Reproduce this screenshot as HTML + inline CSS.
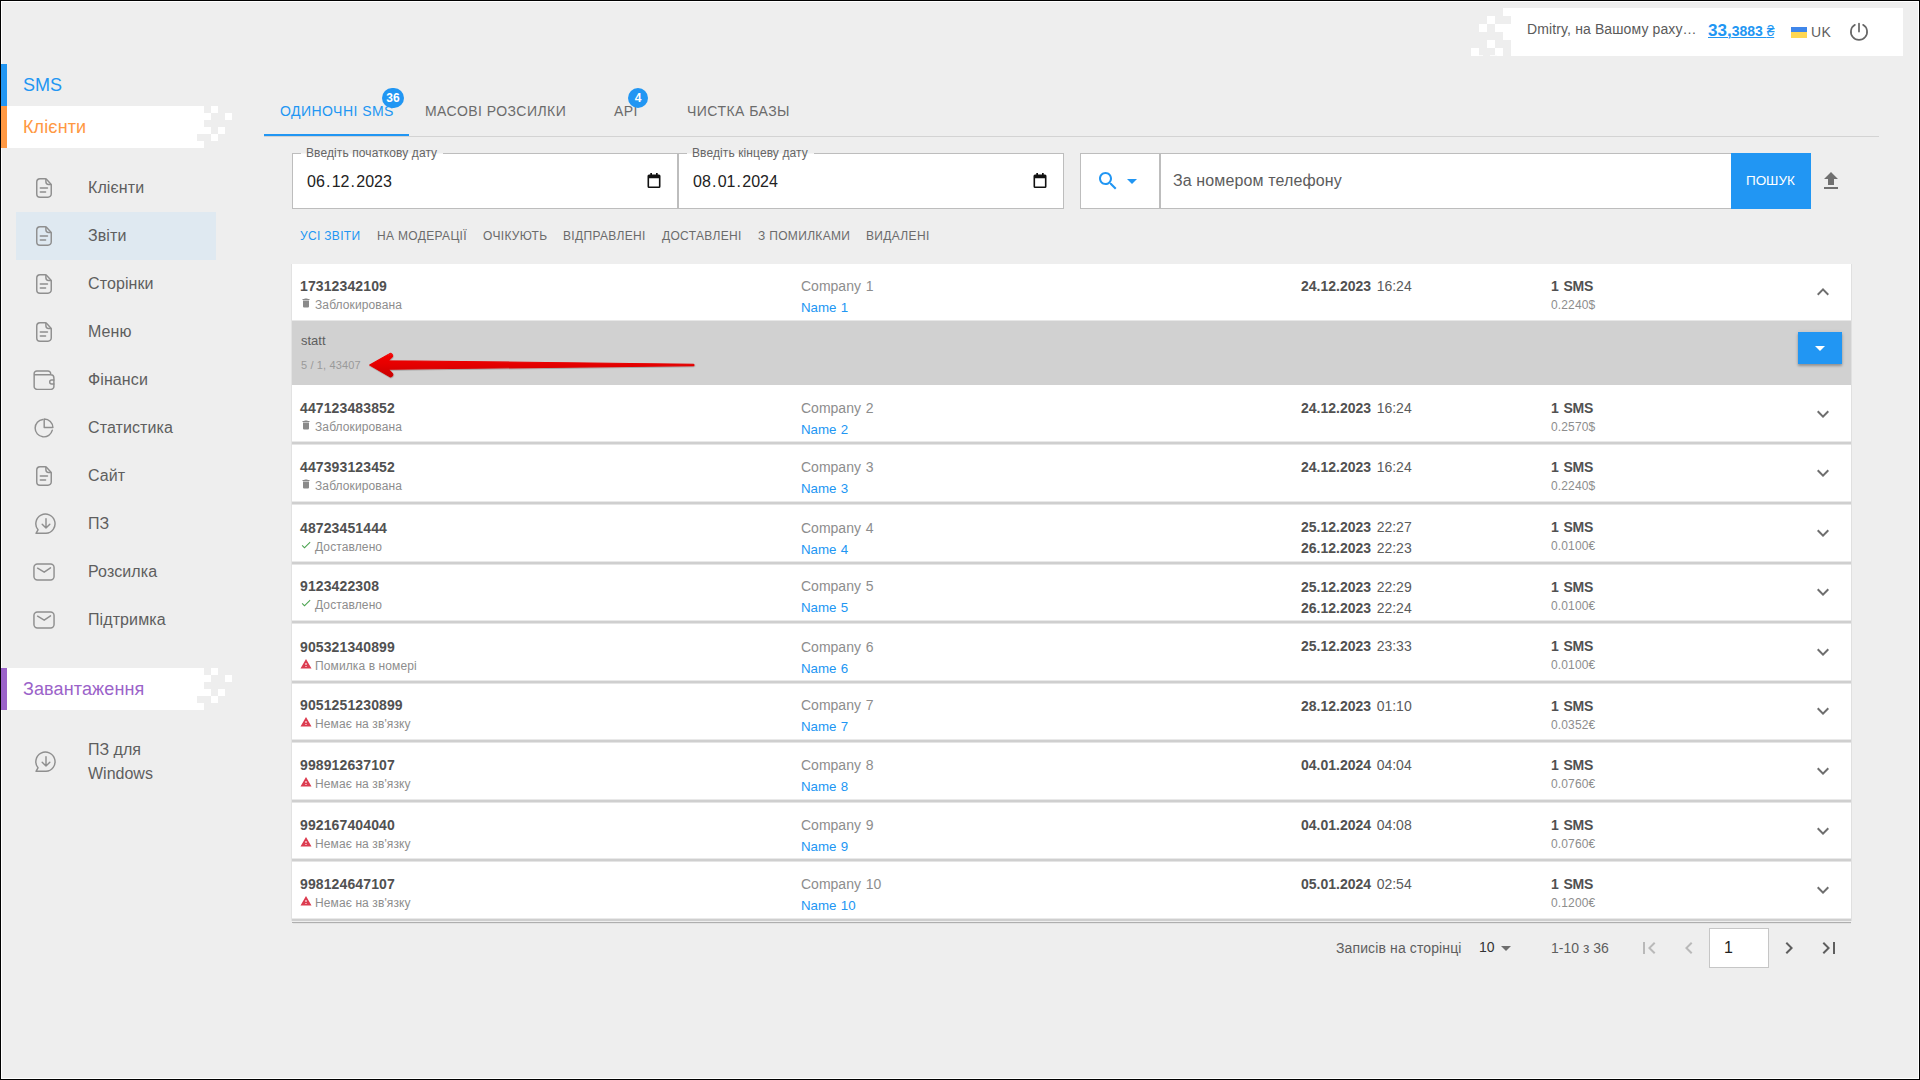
<!DOCTYPE html>
<html lang="uk"><head><meta charset="utf-8"><title>SMS - Звіти</title>
<style>
html,body{margin:0;padding:0}
html{overflow:hidden;background:#eeeeee;font-family:"Liberation Sans",sans-serif}
body{width:1920px;height:1080px;overflow:hidden;background:#eeeeee;position:relative;
font-family:"Liberation Sans",sans-serif;font-size:14px;color:#444}
.t{position:absolute;white-space:nowrap;margin:0;padding:0}
.b{position:absolute;display:block}
.st{fill:none;stroke:#8f8f8f;stroke-width:1.45;stroke-linecap:round;stroke-linejoin:round}
.tab{letter-spacing:.46px}
.sf{letter-spacing:.33px}
</style></head><body>
<div class="b" style="left:1px;top:1px;width:1916px;height:1076px;background:transparent;border:1px solid #fff;z-index:1"></div>
<div class="b" style="left:1px;top:64px;width:6px;height:42px;background:#2196f3;z-index:2"></div>
<div class="t" style="left:23px;top:73px;font-size:18px;line-height:24px;color:#2196f3;">SMS</div>
<div class="b" style="left:1px;top:106px;width:6px;height:42px;background:#ff9842;z-index:2"></div>
<div class="b" style="left:7px;top:106px;width:197px;height:7px;background:#fff;"></div>
<div class="b" style="left:211px;top:106px;width:7px;height:7px;background:#fff;"></div>
<div class="b" style="left:7px;top:113px;width:204px;height:7px;background:#fff;"></div>
<div class="b" style="left:225px;top:113px;width:7px;height:7px;background:#fff;"></div>
<div class="b" style="left:7px;top:120px;width:197px;height:7px;background:#fff;"></div>
<div class="b" style="left:7px;top:127px;width:204px;height:7px;background:#fff;"></div>
<div class="b" style="left:218px;top:127px;width:7px;height:7px;background:#fff;"></div>
<div class="b" style="left:7px;top:134px;width:190px;height:7px;background:#fff;"></div>
<div class="b" style="left:211px;top:134px;width:7px;height:7px;background:#fff;"></div>
<div class="b" style="left:7px;top:141px;width:197px;height:7px;background:#fff;"></div>
<div class="t" style="left:23px;top:115px;font-size:18px;line-height:24px;color:#ff9842;letter-spacing:.12px;">Клієнти</div>
<div class="b" style="left:1px;top:668px;width:6px;height:42px;background:#9b63c9;z-index:2"></div>
<div class="b" style="left:7px;top:668px;width:197px;height:7px;background:#fff;"></div>
<div class="b" style="left:211px;top:668px;width:7px;height:7px;background:#fff;"></div>
<div class="b" style="left:7px;top:675px;width:204px;height:7px;background:#fff;"></div>
<div class="b" style="left:225px;top:675px;width:7px;height:7px;background:#fff;"></div>
<div class="b" style="left:7px;top:682px;width:197px;height:7px;background:#fff;"></div>
<div class="b" style="left:7px;top:689px;width:204px;height:7px;background:#fff;"></div>
<div class="b" style="left:218px;top:689px;width:7px;height:7px;background:#fff;"></div>
<div class="b" style="left:7px;top:696px;width:190px;height:7px;background:#fff;"></div>
<div class="b" style="left:211px;top:696px;width:7px;height:7px;background:#fff;"></div>
<div class="b" style="left:7px;top:703px;width:197px;height:7px;background:#fff;"></div>
<div class="t" style="left:23px;top:677px;font-size:18px;line-height:24px;color:#9b63c9;letter-spacing:.12px;">Завантаження</div>
<div class="b" style="left:16px;top:212px;width:200px;height:48px;background:#dfe9f1;"></div>
<svg class="b" style="left:36px;top:178px;" width="16" height="20" viewBox="0 0 16 20"><path class="st" d="M9.2 .75H4A3.25 3.25 0 0 0 .75 4V16A3.25 3.25 0 0 0 4 19.25H12A3.25 3.25 0 0 0 15.25 16V7.3Q15.25 6.4 14.6 5.7L10.7 1.5Q10 .75 9.2 .75Z"/><path class="st" d="M9.9 1.2V3.8A2.7 2.7 0 0 0 12.6 6.5H15"/><path class="st" d="M4.3 10H11.5M4.3 14H9.6"/></svg>
<div class="t" style="left:88px;top:177px;font-size:16px;line-height:22px;color:#5e5e5e;letter-spacing:.1px;">Клієнти</div>
<svg class="b" style="left:36px;top:226px;" width="16" height="20" viewBox="0 0 16 20"><path class="st" d="M9.2 .75H4A3.25 3.25 0 0 0 .75 4V16A3.25 3.25 0 0 0 4 19.25H12A3.25 3.25 0 0 0 15.25 16V7.3Q15.25 6.4 14.6 5.7L10.7 1.5Q10 .75 9.2 .75Z"/><path class="st" d="M9.9 1.2V3.8A2.7 2.7 0 0 0 12.6 6.5H15"/><path class="st" d="M4.3 10H11.5M4.3 14H9.6"/></svg>
<div class="t" style="left:88px;top:225px;font-size:16px;line-height:22px;color:#5e5e5e;letter-spacing:.1px;">Звіти</div>
<svg class="b" style="left:36px;top:274px;" width="16" height="20" viewBox="0 0 16 20"><path class="st" d="M9.2 .75H4A3.25 3.25 0 0 0 .75 4V16A3.25 3.25 0 0 0 4 19.25H12A3.25 3.25 0 0 0 15.25 16V7.3Q15.25 6.4 14.6 5.7L10.7 1.5Q10 .75 9.2 .75Z"/><path class="st" d="M9.9 1.2V3.8A2.7 2.7 0 0 0 12.6 6.5H15"/><path class="st" d="M4.3 10H11.5M4.3 14H9.6"/></svg>
<div class="t" style="left:88px;top:273px;font-size:16px;line-height:22px;color:#5e5e5e;letter-spacing:.1px;">Сторінки</div>
<svg class="b" style="left:36px;top:322px;" width="16" height="20" viewBox="0 0 16 20"><path class="st" d="M9.2 .75H4A3.25 3.25 0 0 0 .75 4V16A3.25 3.25 0 0 0 4 19.25H12A3.25 3.25 0 0 0 15.25 16V7.3Q15.25 6.4 14.6 5.7L10.7 1.5Q10 .75 9.2 .75Z"/><path class="st" d="M9.9 1.2V3.8A2.7 2.7 0 0 0 12.6 6.5H15"/><path class="st" d="M4.3 10H11.5M4.3 14H9.6"/></svg>
<div class="t" style="left:88px;top:321px;font-size:16px;line-height:22px;color:#5e5e5e;letter-spacing:.1px;">Меню</div>
<svg class="b" style="left:33px;top:370px;" width="22" height="20" viewBox="-.4 -.2 22 20"><path class="st" d="M.75 4.6H17.4A3.1 3.1 0 0 1 20.5 7.7V16.2A3.1 3.1 0 0 1 17.4 19.3H3.85A3.1 3.1 0 0 1 .75 16.2V3.4A2.65 2.65 0 0 1 3.4 .75H14.6A2.65 2.65 0 0 1 17.25 3.4V4.6"/><path class="st" d="M20.5 9.7H18.3A2 2 0 0 0 18.3 13.7H20.5"/></svg>
<div class="t" style="left:88px;top:369px;font-size:16px;line-height:22px;color:#5e5e5e;letter-spacing:.1px;">Фінанси</div>
<svg class="b" style="left:34px;top:418px;" width="21" height="21" viewBox="0 0 21 21"><path class="st" d="M8.9 1.5A8.7 8.7 0 1 0 18.3 12.2"/><path class="st" d="M10.2 .9V9.5H18.9A8.7 8.7 0 0 0 10.2 .9Z"/></svg>
<div class="t" style="left:88px;top:417px;font-size:16px;line-height:22px;color:#5e5e5e;letter-spacing:.1px;">Статистика</div>
<svg class="b" style="left:36px;top:466px;" width="16" height="20" viewBox="0 0 16 20"><path class="st" d="M9.2 .75H4A3.25 3.25 0 0 0 .75 4V16A3.25 3.25 0 0 0 4 19.25H12A3.25 3.25 0 0 0 15.25 16V7.3Q15.25 6.4 14.6 5.7L10.7 1.5Q10 .75 9.2 .75Z"/><path class="st" d="M9.9 1.2V3.8A2.7 2.7 0 0 0 12.6 6.5H15"/><path class="st" d="M4.3 10H11.5M4.3 14H9.6"/></svg>
<div class="t" style="left:88px;top:465px;font-size:16px;line-height:22px;color:#5e5e5e;letter-spacing:.1px;">Сайт</div>
<svg class="b" style="left:35px;top:513.2px;" width="22" height="22" viewBox="0 0 22 22"><path class="st" d="M11 20.3H1L3 16.8A9.6 9.6 0 1 1 11 20.3Z"/><path class="st" d="M11 5.7V15M7.2 11.3L11 15.1L14.8 11.3"/></svg>
<div class="t" style="left:88px;top:513px;font-size:16px;line-height:22px;color:#5e5e5e;letter-spacing:.1px;">ПЗ</div>
<svg class="b" style="left:33px;top:563px;" width="23" height="19" viewBox="0 0 23 19"><rect class="st" x=".95" y=".95" width="20.1" height="16" rx="3.5"/><path class="st" d="M4.6 5.2L11.2 9.2L17.5 4.8"/></svg>
<div class="t" style="left:88px;top:561px;font-size:16px;line-height:22px;color:#5e5e5e;letter-spacing:.1px;">Розсилка</div>
<svg class="b" style="left:33px;top:611px;" width="23" height="19" viewBox="0 0 23 19"><rect class="st" x=".95" y=".95" width="20.1" height="16" rx="3.5"/><path class="st" d="M4.6 5.2L11.2 9.2L17.5 4.8"/></svg>
<div class="t" style="left:88px;top:609px;font-size:16px;line-height:22px;color:#5e5e5e;letter-spacing:.1px;">Підтримка</div>
<svg class="b" style="left:35px;top:751.2px;" width="22" height="22" viewBox="0 0 22 22"><path class="st" d="M11 20.3H1L3 16.8A9.6 9.6 0 1 1 11 20.3Z"/><path class="st" d="M11 5.7V15M7.2 11.3L11 15.1L14.8 11.3"/></svg>
<div class="t" style="left:88px;top:739px;font-size:16px;line-height:22px;color:#5e5e5e;">ПЗ для</div>
<div class="t" style="left:88px;top:763px;font-size:16px;line-height:22px;color:#5e5e5e;">Windows</div>
<div class="b" style="left:1511px;top:8px;width:392px;height:48px;background:#fff;"></div>
<div class="b" style="left:1503px;top:8px;width:8px;height:8px;background:#fff;"></div>
<div class="b" style="left:1487px;top:16px;width:8px;height:8px;background:#fff;"></div>
<div class="b" style="left:1479px;top:24px;width:8px;height:8px;background:#fff;"></div>
<div class="b" style="left:1495px;top:24px;width:8px;height:8px;background:#fff;"></div>
<div class="b" style="left:1503px;top:24px;width:8px;height:8px;background:#fff;"></div>
<div class="b" style="left:1503px;top:32px;width:8px;height:8px;background:#fff;"></div>
<div class="b" style="left:1487px;top:40px;width:8px;height:8px;background:#fff;"></div>
<div class="b" style="left:1471px;top:48px;width:8px;height:8px;background:#fff;"></div>
<div class="b" style="left:1495px;top:48px;width:8px;height:8px;background:#fff;"></div>
<div class="b" style="left:1479px;top:55px;width:4px;height:1px;background:#fbfbfb;"></div>
<div class="b" style="left:1490px;top:55px;width:7px;height:1px;background:#fbfbfb;"></div>
<div class="t" style="left:1527px;top:19px;font-size:14px;line-height:20px;color:#5a5a5a;letter-spacing:.12px;">Dmitry, на Вашому раху…</div>
<div class="t" style="left:1708px;top:18px;line-height:26px;color:#2196f3;font-weight:bold;text-decoration:underline;text-decoration-thickness:1px;text-underline-offset:1.4px"><span style="font-size:17px">33,</span><span style="font-size:14px">3883 <span style="font-weight:normal;letter-spacing:-.3px">₴</span></span></div>
<div class="b" style="left:1791px;top:27px;width:16px;height:5px;background:#3f86ea;"></div>
<div class="b" style="left:1791px;top:32px;width:16px;height:6px;background:#ffd752;"></div>
<div class="t" style="left:1811px;top:22px;font-size:14px;line-height:20px;color:#5e5e5e;letter-spacing:.3px;">UK</div>
<svg class="b" style="left:1847px;top:20px;" width="24" height="24" viewBox="0 0 24 24"><path d="M7.95 4.8A8.1 8.1 0 1 0 16.05 4.8M12 3.6V11.6" fill="none" stroke="#666" stroke-width="1.7" stroke-linecap="round"/></svg>
<div class="b" style="left:264px;top:136px;width:1615px;height:1px;background:#d3d3d3;"></div>
<div class="b" style="left:264px;top:134px;width:145px;height:2px;background:#2196f3;"></div>
<div class="t tab" style="left:280px;top:101px;font-size:14px;line-height:20px;color:#2196f3;">ОДИНОЧНІ SMS</div>
<div class="t tab" style="left:425px;top:101px;font-size:14px;line-height:20px;color:#6b6b6b;">МАСОВІ РОЗСИЛКИ</div>
<div class="t tab" style="left:614px;top:101px;font-size:14px;line-height:20px;color:#6b6b6b;">API</div>
<div class="t tab" style="left:687px;top:101px;font-size:14px;line-height:20px;color:#6b6b6b;">ЧИСТКА БАЗЫ</div>
<div class="b" style="left:382px;top:88px;width:22px;height:20px;border-radius:10px;background:#2196f3;color:#fff;font-size:12px;line-height:20px;text-align:center;font-weight:bold;letter-spacing:0">36</div>
<div class="b" style="left:628px;top:88px;width:20px;height:20px;border-radius:10px;background:#2196f3;color:#fff;font-size:12px;line-height:20px;text-align:center;font-weight:bold;letter-spacing:0">4</div>
<div class="b" style="left:292px;top:153px;width:384px;height:54px;background:#fff;border:1px solid #bdbdbd"></div>
<div class="b" style="left:301px;top:153px;width:142px;height:1px;background:#f6f6f6;"></div>
<div class="t" style="left:306px;top:144px;font-size:12px;line-height:18px;color:#666;letter-spacing:.1px;">Введіть початкову дату</div>
<div class="t" style="left:307px;top:170px;font-size:16px;line-height:24px;color:#222"><span>06</span><span style="margin:0 1.2px 0 1.2px">.</span><span>12</span><span style="margin:0 1.2px 0 1.2px">.</span><span>2023</span></div>
<svg class="b" style="left:647px;top:173px;" width="14" height="15" viewBox="0 0 14 15"><path fill="#111" fill-rule="evenodd" d="M2 1.5h1.3V0h1.7v1.5h4V0h1.7v1.5H12A1.5 1.5 0 0 1 13.5 3v10.5A1.5 1.5 0 0 1 12 15H2A1.5 1.5 0 0 1 .5 13.500V3A1.5 1.5 0 0 1 2 1.5zM2.1 5.2v8.2h9.8V5.2z"/></svg>
<div class="b" style="left:678px;top:153px;width:384px;height:54px;background:#fff;border:1px solid #bdbdbd"></div>
<div class="b" style="left:687px;top:153px;width:127px;height:1px;background:#f6f6f6;"></div>
<div class="t" style="left:692px;top:144px;font-size:12px;line-height:18px;color:#666;letter-spacing:.1px;">Введіть кінцеву дату</div>
<div class="t" style="left:693px;top:170px;font-size:16px;line-height:24px;color:#222"><span>08</span><span style="margin:0 1.2px 0 1.2px">.</span><span>01</span><span style="margin:0 1.2px 0 1.2px">.</span><span>2024</span></div>
<svg class="b" style="left:1033px;top:173px;" width="14" height="15" viewBox="0 0 14 15"><path fill="#111" fill-rule="evenodd" d="M2 1.5h1.3V0h1.7v1.5h4V0h1.7v1.5H12A1.5 1.5 0 0 1 13.5 3v10.5A1.5 1.5 0 0 1 12 15H2A1.5 1.5 0 0 1 .5 13.500V3A1.5 1.5 0 0 1 2 1.5zM2.1 5.2v8.2h9.8V5.2z"/></svg>
<div class="b" style="left:1080px;top:153px;width:78px;height:54px;background:#fff;border:1px solid #bdbdbd"></div>
<div class="b" style="left:1160px;top:153px;width:571px;height:54px;background:#fff;border:1px solid #bdbdbd;border-right:none"></div>
<svg class="b" style="left:1096px;top:169px;" width="24" height="24" viewBox="0 0 24 24"><path d="M15.5 14h-.79l-.28-.27C15.41 12.59 16 11.11 16 9.5 16 5.91 13.09 3 9.5 3S3 5.91 3 9.5 5.91 16 9.5 16c1.61 0 3.09-.59 4.23-1.57l.27.28v.79l5 4.99L20.49 19l-4.99-5zm-6 0C7.01 14 5 11.99 5 9.5S7.01 5 9.5 5 14 7.01 14 9.5 11.99 14 9.5 14z" fill="#2196f3"/></svg>
<svg class="b" style="left:1120px;top:169px;" width="24" height="24" viewBox="0 0 24 24"><path d="M7 10l5 5 5-5z" fill="#2196f3"/></svg>
<div class="t" style="left:1173px;top:170px;font-size:16px;line-height:22px;color:#5c5c5c;letter-spacing:.12px;">За номером телефону</div>
<div class="b" style="left:1731px;top:153px;width:80px;height:56px;background:#2196f3;"></div>
<div class="t" style="left:1746px;top:171px;font-size:13.5px;line-height:19.5px;color:#fff;letter-spacing:-.05px;">ПОШУК</div>
<svg class="b" style="left:1819px;top:169px;" width="24" height="24" viewBox="0 0 24 24"><path d="M9 16h6v-6h4l-7-7-7 7h4zm-4 2h14v2H5z" fill="#707070"/></svg>
<div class="t sf" style="left:300px;top:227px;font-size:12px;line-height:18px;color:#2196f3;">УСІ ЗВІТИ</div>
<div class="t sf" style="left:377px;top:227px;font-size:12px;line-height:18px;color:#6b6b6b;">НА МОДЕРАЦІЇ</div>
<div class="t sf" style="left:483px;top:227px;font-size:12px;line-height:18px;color:#6b6b6b;">ОЧІКУЮТЬ</div>
<div class="t sf" style="left:563px;top:227px;font-size:12px;line-height:18px;color:#6b6b6b;">ВІДПРАВЛЕНІ</div>
<div class="t sf" style="left:662px;top:227px;font-size:12px;line-height:18px;color:#6b6b6b;">ДОСТАВЛЕНІ</div>
<div class="t sf" style="left:758px;top:227px;font-size:12px;line-height:18px;color:#6b6b6b;">З ПОМИЛКАМИ</div>
<div class="t sf" style="left:866px;top:227px;font-size:12px;line-height:18px;color:#6b6b6b;">ВИДАЛЕНІ</div>
<div class="b" style="left:291px;top:264px;width:1px;height:657px;background:#e2e2e2;"></div>
<div class="b" style="left:1851px;top:264px;width:1px;height:657px;background:#e0e0e0;"></div>
<div class="b" style="left:292px;top:264px;width:1559px;height:657px;background:#cfcfcf;"></div>
<div class="b" style="left:292px;top:922px;width:1559px;height:1px;background:#aeaeae;"></div>
<div class="b" style="left:293px;top:923px;width:1558px;height:1px;background:#e4e4e4;"></div>
<div class="b" style="left:292px;top:264px;width:1559px;height:56px;background:#fff;"></div>
<div class="t" style="left:300px;top:276px;font-size:14px;line-height:20px;color:#515151;font-weight:bold;letter-spacing:.12px;">17312342109</div>
<svg class="b" style="left:300px;top:297px;" width="12" height="12" viewBox="0 0 24 24"><path d="M19,4H15.5L14.5,3H9.5L8.5,4H5V6H19M6,19A2,2 0 0,0 8,21H16A2,2 0 0,0 18,19V7H6V19Z" fill="#8a8a8a"/></svg>
<div class="t" style="left:315px;top:296px;font-size:12px;line-height:18px;color:#8d8d8d;letter-spacing:.11px;">Заблокирована</div>
<div class="t" style="left:801px;top:276px;font-size:14px;line-height:20px;color:#8d8d8d;word-spacing:.9px;">Company 1</div>
<div class="t" style="left:801px;top:298px;font-size:13.3px;line-height:19.3px;color:#2196f3;word-spacing:.7px;">Name 1</div>
<div class="t" style="left:1301px;top:276px;font-size:14px;line-height:20px;color:#5a5a5a;"><b style="color:#515151">24.12.2023</b> <span style="margin-left:1.7px">16:24</span></div>
<div class="t" style="left:1551px;top:276px;font-size:14px;line-height:20px;color:#515151;font-weight:bold;word-spacing:1.2px;letter-spacing:-.2px;">1 SMS</div>
<div class="t" style="left:1551px;top:296px;font-size:12px;line-height:18px;color:#8d8d8d;letter-spacing:.13px;">0.2240$</div>
<svg class="b" style="left:1811px;top:280px;" width="24" height="24" viewBox="0 0 24 24"><path d="M12 8l-6 6 1.41 1.41L12 10.83l4.59 4.58L18 14z" fill="#6e6e6e"/></svg>
<div class="b" style="left:292px;top:385px;width:1559px;height:56px;background:#fff;"></div>
<div class="b" style="left:292px;top:384px;width:1559px;height:1px;background:#e5e5e5;"></div>
<div class="b" style="left:292px;top:441px;width:1559px;height:1px;background:#e9e9e9;"></div>
<div class="t" style="left:300px;top:398px;font-size:14px;line-height:20px;color:#515151;font-weight:bold;letter-spacing:.12px;">447123483852</div>
<svg class="b" style="left:300px;top:419px;" width="12" height="12" viewBox="0 0 24 24"><path d="M19,4H15.5L14.5,3H9.5L8.5,4H5V6H19M6,19A2,2 0 0,0 8,21H16A2,2 0 0,0 18,19V7H6V19Z" fill="#8a8a8a"/></svg>
<div class="t" style="left:315px;top:418px;font-size:12px;line-height:18px;color:#8d8d8d;letter-spacing:.11px;">Заблокирована</div>
<div class="t" style="left:801px;top:398px;font-size:14px;line-height:20px;color:#8d8d8d;word-spacing:.9px;">Company 2</div>
<div class="t" style="left:801px;top:420px;font-size:13.3px;line-height:19.3px;color:#2196f3;word-spacing:.7px;">Name 2</div>
<div class="t" style="left:1301px;top:398px;font-size:14px;line-height:20px;color:#5a5a5a;"><b style="color:#515151">24.12.2023</b> <span style="margin-left:1.7px">16:24</span></div>
<div class="t" style="left:1551px;top:398px;font-size:14px;line-height:20px;color:#515151;font-weight:bold;word-spacing:1.2px;letter-spacing:-.2px;">1 SMS</div>
<div class="t" style="left:1551px;top:418px;font-size:12px;line-height:18px;color:#8d8d8d;letter-spacing:.13px;">0.2570$</div>
<svg class="b" style="left:1811px;top:402px;" width="24" height="24" viewBox="0 0 24 24"><path d="M16.59 8.59L12 13.17 7.41 8.59 6 10l6 6 6-6z" fill="#6e6e6e"/></svg>
<div class="b" style="left:292px;top:445px;width:1559px;height:56px;background:#fff;"></div>
<div class="b" style="left:292px;top:444px;width:1559px;height:1px;background:#e5e5e5;"></div>
<div class="b" style="left:292px;top:501px;width:1559px;height:1px;background:#e9e9e9;"></div>
<div class="t" style="left:300px;top:457px;font-size:14px;line-height:20px;color:#515151;font-weight:bold;letter-spacing:.12px;">447393123452</div>
<svg class="b" style="left:300px;top:478px;" width="12" height="12" viewBox="0 0 24 24"><path d="M19,4H15.5L14.5,3H9.5L8.5,4H5V6H19M6,19A2,2 0 0,0 8,21H16A2,2 0 0,0 18,19V7H6V19Z" fill="#8a8a8a"/></svg>
<div class="t" style="left:315px;top:477px;font-size:12px;line-height:18px;color:#8d8d8d;letter-spacing:.11px;">Заблокирована</div>
<div class="t" style="left:801px;top:457px;font-size:14px;line-height:20px;color:#8d8d8d;word-spacing:.9px;">Company 3</div>
<div class="t" style="left:801px;top:479px;font-size:13.3px;line-height:19.3px;color:#2196f3;word-spacing:.7px;">Name 3</div>
<div class="t" style="left:1301px;top:457px;font-size:14px;line-height:20px;color:#5a5a5a;"><b style="color:#515151">24.12.2023</b> <span style="margin-left:1.7px">16:24</span></div>
<div class="t" style="left:1551px;top:457px;font-size:14px;line-height:20px;color:#515151;font-weight:bold;word-spacing:1.2px;letter-spacing:-.2px;">1 SMS</div>
<div class="t" style="left:1551px;top:477px;font-size:12px;line-height:18px;color:#8d8d8d;letter-spacing:.13px;">0.2240$</div>
<svg class="b" style="left:1811px;top:461px;" width="24" height="24" viewBox="0 0 24 24"><path d="M16.59 8.59L12 13.17 7.41 8.59 6 10l6 6 6-6z" fill="#6e6e6e"/></svg>
<div class="b" style="left:292px;top:505px;width:1559px;height:56px;background:#fff;"></div>
<div class="b" style="left:292px;top:504px;width:1559px;height:1px;background:#e5e5e5;"></div>
<div class="b" style="left:292px;top:561px;width:1559px;height:1px;background:#e9e9e9;"></div>
<div class="t" style="left:300px;top:518px;font-size:14px;line-height:20px;color:#515151;font-weight:bold;letter-spacing:.12px;">48723451444</div>
<svg class="b" style="left:300px;top:539px;" width="12" height="12" viewBox="0 0 24 24"><path d="M21,7L9,19L3.5,13.5L4.91,12.09L9,16.17L19.59,5.59L21,7Z" fill="#4ca350"/></svg>
<div class="t" style="left:315px;top:538px;font-size:12px;line-height:18px;color:#8d8d8d;letter-spacing:.11px;">Доставлено</div>
<div class="t" style="left:801px;top:518px;font-size:14px;line-height:20px;color:#8d8d8d;word-spacing:.9px;">Company 4</div>
<div class="t" style="left:801px;top:540px;font-size:13.3px;line-height:19.3px;color:#2196f3;word-spacing:.7px;">Name 4</div>
<div class="t" style="left:1301px;top:517px;font-size:14px;line-height:20px;color:#5a5a5a;"><b style="color:#515151">25.12.2023</b> <span style="margin-left:1.7px">22:27</span></div>
<div class="t" style="left:1301px;top:538px;font-size:14px;line-height:20px;color:#5a5a5a;"><b style="color:#515151">26.12.2023</b> <span style="margin-left:1.7px">22:23</span></div>
<div class="t" style="left:1551px;top:517px;font-size:14px;line-height:20px;color:#515151;font-weight:bold;word-spacing:1.2px;letter-spacing:-.2px;">1 SMS</div>
<div class="t" style="left:1551px;top:537px;font-size:12px;line-height:18px;color:#8d8d8d;letter-spacing:.13px;">0.0100€</div>
<svg class="b" style="left:1811px;top:521px;" width="24" height="24" viewBox="0 0 24 24"><path d="M16.59 8.59L12 13.17 7.41 8.59 6 10l6 6 6-6z" fill="#6e6e6e"/></svg>
<div class="b" style="left:292px;top:565px;width:1559px;height:55px;background:#fff;"></div>
<div class="b" style="left:292px;top:564px;width:1559px;height:1px;background:#e5e5e5;"></div>
<div class="b" style="left:292px;top:620px;width:1559px;height:1px;background:#e9e9e9;"></div>
<div class="t" style="left:300px;top:576px;font-size:14px;line-height:20px;color:#515151;font-weight:bold;letter-spacing:.12px;">9123422308</div>
<svg class="b" style="left:300px;top:597px;" width="12" height="12" viewBox="0 0 24 24"><path d="M21,7L9,19L3.5,13.5L4.91,12.09L9,16.17L19.59,5.59L21,7Z" fill="#4ca350"/></svg>
<div class="t" style="left:315px;top:596px;font-size:12px;line-height:18px;color:#8d8d8d;letter-spacing:.11px;">Доставлено</div>
<div class="t" style="left:801px;top:576px;font-size:14px;line-height:20px;color:#8d8d8d;word-spacing:.9px;">Company 5</div>
<div class="t" style="left:801px;top:598px;font-size:13.3px;line-height:19.3px;color:#2196f3;word-spacing:.7px;">Name 5</div>
<div class="t" style="left:1301px;top:577px;font-size:14px;line-height:20px;color:#5a5a5a;"><b style="color:#515151">25.12.2023</b> <span style="margin-left:1.7px">22:29</span></div>
<div class="t" style="left:1301px;top:598px;font-size:14px;line-height:20px;color:#5a5a5a;"><b style="color:#515151">26.12.2023</b> <span style="margin-left:1.7px">22:24</span></div>
<div class="t" style="left:1551px;top:577px;font-size:14px;line-height:20px;color:#515151;font-weight:bold;word-spacing:1.2px;letter-spacing:-.2px;">1 SMS</div>
<div class="t" style="left:1551px;top:597px;font-size:12px;line-height:18px;color:#8d8d8d;letter-spacing:.13px;">0.0100€</div>
<svg class="b" style="left:1811px;top:580px;" width="24" height="24" viewBox="0 0 24 24"><path d="M16.59 8.59L12 13.17 7.41 8.59 6 10l6 6 6-6z" fill="#6e6e6e"/></svg>
<div class="b" style="left:292px;top:624px;width:1559px;height:56px;background:#fff;"></div>
<div class="b" style="left:292px;top:623px;width:1559px;height:1px;background:#e5e5e5;"></div>
<div class="b" style="left:292px;top:680px;width:1559px;height:1px;background:#e9e9e9;"></div>
<div class="t" style="left:300px;top:637px;font-size:14px;line-height:20px;color:#515151;font-weight:bold;letter-spacing:.12px;">905321340899</div>
<svg class="b" style="left:300px;top:658px;" width="12" height="12" viewBox="0 0 24 24"><path d="M13,14H11V10H13M13,18H11V16H13M1,21H23L12,2L1,21Z" fill="#dc3c50"/></svg>
<div class="t" style="left:315px;top:657px;font-size:12px;line-height:18px;color:#8d8d8d;letter-spacing:.11px;">Помилка в номері</div>
<div class="t" style="left:801px;top:637px;font-size:14px;line-height:20px;color:#8d8d8d;word-spacing:.9px;">Company 6</div>
<div class="t" style="left:801px;top:659px;font-size:13.3px;line-height:19.3px;color:#2196f3;word-spacing:.7px;">Name 6</div>
<div class="t" style="left:1301px;top:636px;font-size:14px;line-height:20px;color:#5a5a5a;"><b style="color:#515151">25.12.2023</b> <span style="margin-left:1.7px">23:33</span></div>
<div class="t" style="left:1551px;top:636px;font-size:14px;line-height:20px;color:#515151;font-weight:bold;word-spacing:1.2px;letter-spacing:-.2px;">1 SMS</div>
<div class="t" style="left:1551px;top:656px;font-size:12px;line-height:18px;color:#8d8d8d;letter-spacing:.13px;">0.0100€</div>
<svg class="b" style="left:1811px;top:640px;" width="24" height="24" viewBox="0 0 24 24"><path d="M16.59 8.59L12 13.17 7.41 8.59 6 10l6 6 6-6z" fill="#6e6e6e"/></svg>
<div class="b" style="left:292px;top:684px;width:1559px;height:55px;background:#fff;"></div>
<div class="b" style="left:292px;top:683px;width:1559px;height:1px;background:#e5e5e5;"></div>
<div class="b" style="left:292px;top:739px;width:1559px;height:1px;background:#e9e9e9;"></div>
<div class="t" style="left:300px;top:695px;font-size:14px;line-height:20px;color:#515151;font-weight:bold;letter-spacing:.12px;">9051251230899</div>
<svg class="b" style="left:300px;top:716px;" width="12" height="12" viewBox="0 0 24 24"><path d="M13,14H11V10H13M13,18H11V16H13M1,21H23L12,2L1,21Z" fill="#dc3c50"/></svg>
<div class="t" style="left:315px;top:715px;font-size:12px;line-height:18px;color:#8d8d8d;letter-spacing:.11px;">Немає на зв&#x27;язку</div>
<div class="t" style="left:801px;top:695px;font-size:14px;line-height:20px;color:#8d8d8d;word-spacing:.9px;">Company 7</div>
<div class="t" style="left:801px;top:717px;font-size:13.3px;line-height:19.3px;color:#2196f3;word-spacing:.7px;">Name 7</div>
<div class="t" style="left:1301px;top:696px;font-size:14px;line-height:20px;color:#5a5a5a;"><b style="color:#515151">28.12.2023</b> <span style="margin-left:1.7px">01:10</span></div>
<div class="t" style="left:1551px;top:696px;font-size:14px;line-height:20px;color:#515151;font-weight:bold;word-spacing:1.2px;letter-spacing:-.2px;">1 SMS</div>
<div class="t" style="left:1551px;top:716px;font-size:12px;line-height:18px;color:#8d8d8d;letter-spacing:.13px;">0.0352€</div>
<svg class="b" style="left:1811px;top:699px;" width="24" height="24" viewBox="0 0 24 24"><path d="M16.59 8.59L12 13.17 7.41 8.59 6 10l6 6 6-6z" fill="#6e6e6e"/></svg>
<div class="b" style="left:292px;top:743px;width:1559px;height:56px;background:#fff;"></div>
<div class="b" style="left:292px;top:742px;width:1559px;height:1px;background:#e5e5e5;"></div>
<div class="b" style="left:292px;top:799px;width:1559px;height:1px;background:#e9e9e9;"></div>
<div class="t" style="left:300px;top:755px;font-size:14px;line-height:20px;color:#515151;font-weight:bold;letter-spacing:.12px;">998912637107</div>
<svg class="b" style="left:300px;top:776px;" width="12" height="12" viewBox="0 0 24 24"><path d="M13,14H11V10H13M13,18H11V16H13M1,21H23L12,2L1,21Z" fill="#dc3c50"/></svg>
<div class="t" style="left:315px;top:775px;font-size:12px;line-height:18px;color:#8d8d8d;letter-spacing:.11px;">Немає на зв&#x27;язку</div>
<div class="t" style="left:801px;top:755px;font-size:14px;line-height:20px;color:#8d8d8d;word-spacing:.9px;">Company 8</div>
<div class="t" style="left:801px;top:777px;font-size:13.3px;line-height:19.3px;color:#2196f3;word-spacing:.7px;">Name 8</div>
<div class="t" style="left:1301px;top:755px;font-size:14px;line-height:20px;color:#5a5a5a;"><b style="color:#515151">04.01.2024</b> <span style="margin-left:1.7px">04:04</span></div>
<div class="t" style="left:1551px;top:755px;font-size:14px;line-height:20px;color:#515151;font-weight:bold;word-spacing:1.2px;letter-spacing:-.2px;">1 SMS</div>
<div class="t" style="left:1551px;top:775px;font-size:12px;line-height:18px;color:#8d8d8d;letter-spacing:.13px;">0.0760€</div>
<svg class="b" style="left:1811px;top:759px;" width="24" height="24" viewBox="0 0 24 24"><path d="M16.59 8.59L12 13.17 7.41 8.59 6 10l6 6 6-6z" fill="#6e6e6e"/></svg>
<div class="b" style="left:292px;top:803px;width:1559px;height:55px;background:#fff;"></div>
<div class="b" style="left:292px;top:802px;width:1559px;height:1px;background:#e5e5e5;"></div>
<div class="b" style="left:292px;top:858px;width:1559px;height:1px;background:#e9e9e9;"></div>
<div class="t" style="left:300px;top:815px;font-size:14px;line-height:20px;color:#515151;font-weight:bold;letter-spacing:.12px;">992167404040</div>
<svg class="b" style="left:300px;top:836px;" width="12" height="12" viewBox="0 0 24 24"><path d="M13,14H11V10H13M13,18H11V16H13M1,21H23L12,2L1,21Z" fill="#dc3c50"/></svg>
<div class="t" style="left:315px;top:835px;font-size:12px;line-height:18px;color:#8d8d8d;letter-spacing:.11px;">Немає на зв&#x27;язку</div>
<div class="t" style="left:801px;top:815px;font-size:14px;line-height:20px;color:#8d8d8d;word-spacing:.9px;">Company 9</div>
<div class="t" style="left:801px;top:837px;font-size:13.3px;line-height:19.3px;color:#2196f3;word-spacing:.7px;">Name 9</div>
<div class="t" style="left:1301px;top:815px;font-size:14px;line-height:20px;color:#5a5a5a;"><b style="color:#515151">04.01.2024</b> <span style="margin-left:1.7px">04:08</span></div>
<div class="t" style="left:1551px;top:815px;font-size:14px;line-height:20px;color:#515151;font-weight:bold;word-spacing:1.2px;letter-spacing:-.2px;">1 SMS</div>
<div class="t" style="left:1551px;top:835px;font-size:12px;line-height:18px;color:#8d8d8d;letter-spacing:.13px;">0.0760€</div>
<svg class="b" style="left:1811px;top:819px;" width="24" height="24" viewBox="0 0 24 24"><path d="M16.59 8.59L12 13.17 7.41 8.59 6 10l6 6 6-6z" fill="#6e6e6e"/></svg>
<div class="b" style="left:292px;top:862px;width:1559px;height:56px;background:#fff;"></div>
<div class="b" style="left:292px;top:861px;width:1559px;height:1px;background:#e5e5e5;"></div>
<div class="b" style="left:292px;top:918px;width:1559px;height:1px;background:#e9e9e9;"></div>
<div class="t" style="left:300px;top:874px;font-size:14px;line-height:20px;color:#515151;font-weight:bold;letter-spacing:.12px;">998124647107</div>
<svg class="b" style="left:300px;top:895px;" width="12" height="12" viewBox="0 0 24 24"><path d="M13,14H11V10H13M13,18H11V16H13M1,21H23L12,2L1,21Z" fill="#dc3c50"/></svg>
<div class="t" style="left:315px;top:894px;font-size:12px;line-height:18px;color:#8d8d8d;letter-spacing:.11px;">Немає на зв&#x27;язку</div>
<div class="t" style="left:801px;top:874px;font-size:14px;line-height:20px;color:#8d8d8d;word-spacing:.9px;">Company 10</div>
<div class="t" style="left:801px;top:896px;font-size:13.3px;line-height:19.3px;color:#2196f3;word-spacing:.7px;">Name 10</div>
<div class="t" style="left:1301px;top:874px;font-size:14px;line-height:20px;color:#5a5a5a;"><b style="color:#515151">05.01.2024</b> <span style="margin-left:1.7px">02:54</span></div>
<div class="t" style="left:1551px;top:874px;font-size:14px;line-height:20px;color:#515151;font-weight:bold;word-spacing:1.2px;letter-spacing:-.2px;">1 SMS</div>
<div class="t" style="left:1551px;top:894px;font-size:12px;line-height:18px;color:#8d8d8d;letter-spacing:.13px;">0.1200€</div>
<svg class="b" style="left:1811px;top:878px;" width="24" height="24" viewBox="0 0 24 24"><path d="M16.59 8.59L12 13.17 7.41 8.59 6 10l6 6 6-6z" fill="#6e6e6e"/></svg>
<div class="b" style="left:292px;top:320px;width:1559px;height:65px;background:#d1d1d1;"></div>
<div class="b" style="left:292px;top:320px;width:1559px;height:1px;background:#e7e7e7;"></div>
<div class="t" style="left:301px;top:331px;font-size:13px;line-height:19px;color:#5e5e5e;">statt</div>
<div class="t" style="left:301px;top:357px;font-size:11px;line-height:17px;color:#9a9a9a;letter-spacing:.13px;">5 / 1, 43407</div>
<div class="b" style="left:1798px;top:332px;width:44px;height:32px;background:#2196f3;box-shadow:0 2px 2px rgba(0,0,0,.22),0 1px 4px rgba(0,0,0,.14)"></div>
<svg class="b" style="left:1808px;top:336px;" width="24" height="24" viewBox="0 0 24 24"><path d="M7 10l5 5 5-5z" fill="#fff"/></svg>
<svg class="b" style="left:360px;top:345px;overflow:visible" width="345" height="40" viewBox="360 345 345 40">
<defs><linearGradient id="rg" x1="0" y1="0" x2="0" y2="1"><stop offset="0" stop-color="#f40808"/><stop offset=".45" stop-color="#e60000"/><stop offset="1" stop-color="#c90000"/></linearGradient>
<filter id="sh" x="-5%" y="-30%" width="110%" height="170%"><feDropShadow dx=".4" dy=".7" stdDeviation=".5" flood-color="#000" flood-opacity=".3"/></filter></defs>
<path filter="url(#sh)" fill="url(#rg)" stroke="url(#rg)" stroke-width="1.1" stroke-linejoin="round"
 d="M369.7 365.1L389.2 353.9A2.1 2.1 0 0 1 391.9 357.1L388.4 360.7L693.3 364.3A.1 .1 0 0 1 693.3 365.6L388.4 369.3L391.9 373.0A2.1 2.1 0 0 1 389.2 376.3Z"/>
</svg>
<div class="t" style="left:1336px;top:938px;font-size:14px;line-height:20px;color:#5e5e5e;letter-spacing:.12px;">Записів на сторінці</div>
<div class="t" style="left:1479px;top:937px;font-size:14px;line-height:20px;color:#333;">10</div>
<svg class="b" style="left:1494px;top:936px;" width="24" height="24" viewBox="0 0 24 24"><path d="M7 10l5 5 5-5z" fill="#6e6e6e"/></svg>
<div class="t" style="left:1551px;top:938px;font-size:14px;line-height:20px;color:#5e5e5e;">1-10 з 36</div>
<svg class="b" style="left:1637px;top:936px;" width="24" height="24" viewBox="0 0 24 24"><path d="M18.41 16.59L13.82 12l4.59-4.59L17 6l-6 6 6 6zM6 6h2v12H6z" fill="#b9b9b9"/></svg>
<svg class="b" style="left:1677px;top:936px;" width="24" height="24" viewBox="0 0 24 24"><path d="M15.41 7.41L14 6l-6 6 6 6 1.41-1.41L10.83 12z" fill="#b9b9b9"/></svg>
<div class="b" style="left:1709px;top:928px;width:58px;height:38px;background:#fff;border:1px solid #c6c6c6"></div>
<div class="t" style="left:1724px;top:937px;font-size:16px;line-height:22px;color:#222;">1</div>
<svg class="b" style="left:1777px;top:936px;" width="24" height="24" viewBox="0 0 24 24"><path d="M10 6L8.59 7.41 13.17 12l-4.58 4.59L10 18l6-6z" fill="#5e5e5e"/></svg>
<svg class="b" style="left:1817px;top:936px;" width="24" height="24" viewBox="0 0 24 24"><path d="M5.59 7.41L10.18 12l-4.59 4.59L7 18l6-6-6-6zM16 6h2v12h-2z" fill="#5e5e5e"/></svg>
<div class="b" style="left:0px;top:0px;width:1918px;height:1078px;background:transparent;border:1px solid #000;z-index:5"></div>
</body></html>
